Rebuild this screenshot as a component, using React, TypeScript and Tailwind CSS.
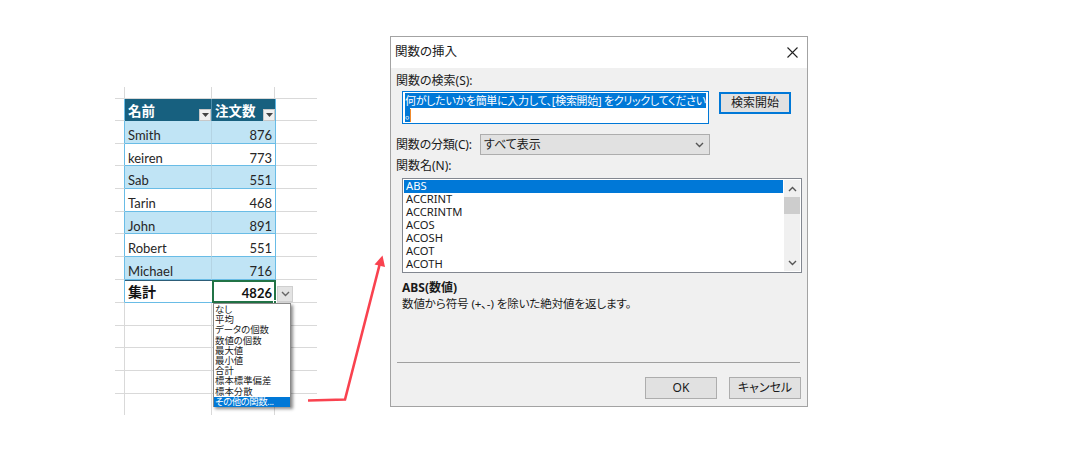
const uiFont = "[font-family:'Noto_Sans','Noto_Sans_CJK_JP',sans-serif] [font-feature-settings:'palt']";
const sheetFont = "[font-family:'Lato','Noto_Sans_CJK_JP',sans-serif]";

const rows: [string, number][] = [
  ["Smith", 876],
  ["keiren", 773],
  ["Sab", 551],
  ["Tarin", 468],
  ["John", 891],
  ["Robert", 551],
  ["Michael", 716],
];

const menu = ["なし", "平均", "データの個数", "数値の個数", "最大値", "最小値", "合計", "標本標準偏差", "標本分散"];
const funcs = ["ACCRINT", "ACCRINTM", "ACOS", "ACOSH", "ACOT", "ACOTH"];

function Grid({ h = "h-[23px]" }: { h?: string }) {
  return (
    <div className={`flex ${h} border-b border-[#d9d9d9]`}>
      <div className="w-[10px] border-r border-[#d9d9d9]" />
      <div className="w-[87px] border-r border-[#d9d9d9]" />
      <div className="w-[63px] border-r border-[#d9d9d9]" />
      <div className="flex-1" />
    </div>
  );
}

function FilterButton() {
  return (
    <div className="w-[12px] h-[12px] bg-[#f0f0f0] border border-[#c8c8c8] flex items-center justify-center self-end">
      <svg width="7" height="4" viewBox="0 0 7 4">
        <path d="M0 0h7L3.5 4z" fill="#444" />
      </svg>
    </div>
  );
}

function Chevron({ up, color = "#555" }: { up?: boolean; color?: string }) {
  return (
    <svg width="9" height="6" viewBox="0 0 9 6" fill="none">
      <path d={up ? "M1 5l3.5-3.5L8 5" : "M1 1l3.5 3.5L8 1"} stroke={color} strokeWidth="1.4" />
    </svg>
  );
}

function Sheet() {
  return (
    <div className={`relative w-[202px] mt-[87px] ml-[115px] ${sheetFont}`}>
      <Grid h="h-[12px]" />
      <div className="flex h-[22px]">
        <div className="w-[10px] border-r border-r-[#69bce6] border-b border-b-[#d9d9d9]" />
        <div className="w-[87px] bg-[#17607f] border-r border-[#4f8fad] flex justify-between pl-[3px] text-white font-bold text-[13.5px] leading-none">
          <span className="pt-[6px]">名前</span>
          <FilterButton />
        </div>
        <div className="w-[64px] bg-[#17607f] border-r border-[#5db4e0] flex justify-between pl-[3px] text-white font-bold text-[13.5px] leading-none">
          <span className="pt-[6px]">注文数</span>
          <FilterButton />
        </div>
        <div className="flex-1 border-b border-[#d9d9d9]" />
      </div>
      {rows.map(([name, n], i) => (
        <div key={name} className="flex h-[22.7px]">
          <div className="w-[10px] border-r border-b border-b-[#d9d9d9] border-r-[#69bce6]" />
          <div
            className={`w-[87px] flex items-center pl-[3px] pt-[7px] text-[13px] leading-none text-[#262626] border-b border-r ${
              i % 2 === 0 ? "bg-[#c0e4f5] border-b-[#69bce6] border-r-[#b4d4e4]" : "bg-white border-b-[#69bce6] border-r-[#d9d9d9]"
            }`}
          >
            {name}
          </div>
          <div
            className={`w-[64px] flex items-center justify-end pr-[3px] pt-[7px] text-[13px] leading-none text-[#262626] border-b border-r border-b-[#69bce6] border-r-[#69bce6] ${
              i % 2 === 0 ? "bg-[#c0e4f5]" : "bg-white"
            }`}
          >
            {n}
          </div>
          <div className="flex-1 border-b border-[#d9d9d9]" />
        </div>
      ))}
      <div className="flex h-[23px]">
        <div className="w-[10px] border-r border-b border-b-[#d9d9d9] border-r-[#69bce6]" />
        <div className="w-[87px] flex items-center pl-[3px] pt-[2px] text-[14px] leading-none font-bold text-[#111] border-b border-[#69bce6] border-t border-t-[#2d5d78]">
          集計
        </div>
        <div className="relative w-[64px] flex items-center justify-end pr-[2px] pt-[4px] text-[13px] leading-none font-bold text-[#111] bg-white border-2 border-[#217346]">
          4826
          <div className="absolute right-[-3px] bottom-[-3px] w-[4px] h-[4px] bg-[#217346] border border-white" />
        </div>
        <div className="flex-1 border-b border-[#d9d9d9] pl-[1px] pt-[6px]">
          <div className="w-[16px] h-[16px] bg-[#e3e3e3] border border-[#cfcfcf] flex items-center justify-center">
            <Chevron color="#666" />
          </div>
        </div>
      </div>
      <Grid h="h-[22.7px]" />
      <Grid h="h-[22.7px]" />
      <Grid h="h-[22.7px]" />
      <Grid h="h-[22.7px]" />
      <div className="flex h-[21px]">
        <div className="w-[10px] border-r border-[#d9d9d9]" />
        <div className="w-[87px] border-r border-[#d9d9d9]" />
        <div className="w-[63px] border-r border-[#d9d9d9]" />
      </div>
      <div
        className={`absolute left-[98px] top-[216px] w-[78px] h-[104px] bg-white border border-[#8a8a8a] shadow-[2px_2px_3px_rgba(0,0,0,0.45)] pt-[1px] ${uiFont} text-[9.4px] leading-[10.2px] text-[#222]`}
      >
        {menu.map((m) => (
          <div key={m} className="h-[10.2px] pl-[1px] whitespace-nowrap">
            {m}
          </div>
        ))}
        <div className="h-[10.2px] pl-[1px] bg-[#0078d7] text-white tracking-[-0.4px] whitespace-nowrap">その他の関数...</div>
      </div>
    </div>
  );
}

function Dialog() {
  return (
    <div className={`w-[418px] h-[371px] mt-[36px] ml-[73px] border border-[#a3a3a3] bg-[#f0f0f0] flex flex-col ${uiFont} text-[12px] text-[#1a1a1a]`}>
      <div className="h-[31px] bg-white flex items-center justify-between pl-[4px] pr-[9px] text-[12.5px]">
        <span>関数の挿入</span>
        <svg width="11" height="11" viewBox="0 0 11 11" stroke="#222" strokeWidth="1.1" fill="none">
          <path d="M0.5 0.5l10 10M10.5 0.5l-10 10" />
        </svg>
      </div>
      <div className="pl-[5px] flex flex-col">
        <div className="h-[14px] mt-[6px] leading-[14px]">関数の検索(S):</div>
        <div className="flex mt-[3px] ml-[6px]">
          <div className="w-[307px] h-[33px] bg-white border border-[#0078d7] pl-[2px] pt-[2px] text-[11px] tracking-[-0.3px] leading-[14px] text-white whitespace-nowrap">
            <div>
              <span className="bg-[#0078d7]">何がしたいかを簡単に入力して、[検索開始] をクリックしてください</span>
            </div>
            <div className="flex items-center">
              <span className="bg-[#0078d7]">。</span>
              <span className="w-px h-[13px] bg-[#f08a2c]" />
            </div>
          </div>
          <div className="w-[72px] h-[22px] ml-[10px] mt-[1px] pb-[1px] bg-[#e1e1e1] border-2 border-[#0078d7] flex items-center justify-center">
            検索開始
          </div>
        </div>
        <div className="flex items-center mt-[10px] h-[21px]">
          <div className="w-[84px] tracking-[-0.2px]">関数の分類(C):</div>
          <div className="w-[230px] h-[21px] bg-[#e1e1e1] border border-[#adadad] flex items-center justify-between pl-[3px] pr-[5px]">
            <span>すべて表示</span>
            <Chevron />
          </div>
        </div>
        <div className="h-[14px] mt-[4px] leading-[14px]">関数名(N):</div>
        <div className="w-[400px] h-[95px] mt-[5px] ml-[6px] bg-white border border-[#828790] flex p-[1px] text-[11.2px] leading-[12px]">
          <div className="flex-1">
            <div className="h-[13px] bg-[#0078d7] text-white pl-[2px]">ABS</div>
            {funcs.map((f) => (
              <div key={f} className="h-[13px] pl-[2px]">
                {f}
              </div>
            ))}
          </div>
          <div className="w-[16px] ml-[1px] bg-[#f0f0f0] flex flex-col items-center">
            <div className="h-[17px] flex items-center justify-center">
              <Chevron up color="#555" />
            </div>
            <div className="w-full h-[17px] bg-[#cdcdcd]" />
            <div className="flex-1" />
            <div className="h-[17px] flex items-center justify-center">
              <Chevron color="#555" />
            </div>
          </div>
        </div>
        <div className="h-[14px] mt-[8px] ml-[6px] font-bold leading-[14px]">ABS(数値)</div>
        <div className="h-[14px] mt-[2px] ml-[6px] text-[11.5px] tracking-[-0.1px] leading-[14px]">数値から符号 (+、-) を除いた絶対値を返します。</div>
        <div className="h-px w-[403px] mt-[51px] ml-[1px] bg-[#a0a0a0]" />
        <div className="flex mt-[14px] ml-[249px] gap-[12px]">
          <div className="w-[72px] h-[22px] bg-[#e1e1e1] border border-[#adadad] flex items-center justify-center">OK</div>
          <div className="w-[72px] h-[22px] bg-[#e1e1e1] border border-[#adadad] flex items-center justify-center">キャンセル</div>
        </div>
      </div>
    </div>
  );
}

export default function App() {
  return (
    <div className="relative w-[1085px] h-[464px] bg-white overflow-hidden flex items-start">
      <Sheet />
      <Dialog />
      <svg className="absolute left-0 top-0 pointer-events-none" width="1085" height="464" fill="none">
        <path d="M308 400.5L345 399.5L379.5 265" stroke="#f9424f" strokeWidth="2.6" />
        <path d="M382.5 255.5L385 267L374.5 264.5z" fill="#f9424f" />
      </svg>
    </div>
  );
}
